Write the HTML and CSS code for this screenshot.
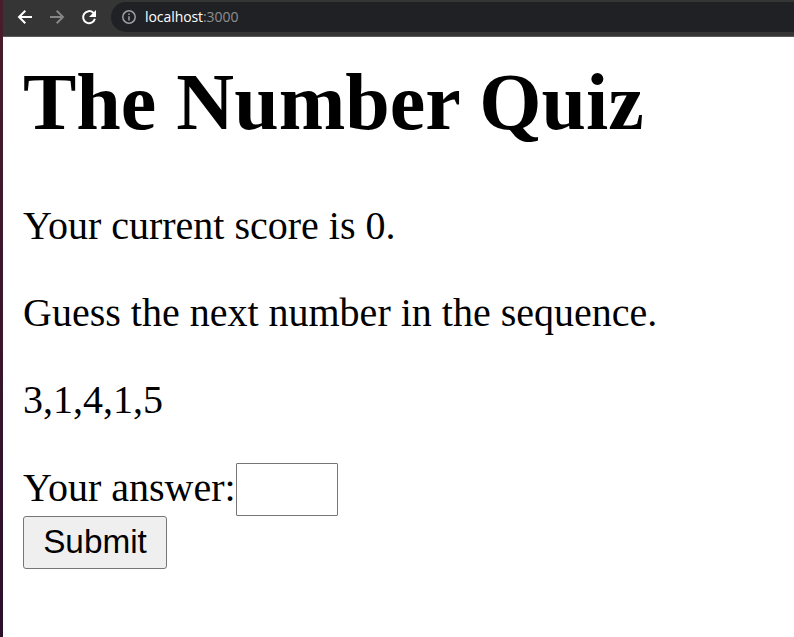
FILE: index.html
```
<!DOCTYPE html>
<html lang="en">
<head>
<meta charset="utf-8">
<title>The Number Quiz</title>
<link rel="stylesheet" href="styles.css">
</head>
<body>
<div class="window">
  <header class="toolbar">
    <svg class="nav" viewBox="0 0 16 16"><path d="M15 8H2.5M8.3 1.7L2 8l6.3 6.3"/></svg>
    <svg class="nav nav-off" viewBox="0 0 16 16"><path d="M1 8h12.5M7.7 1.7L14 8l-6.3 6.3"/></svg>
    <svg class="nav" viewBox="0 0 16 16"><path d="M13.9 9.8A6 6 0 1 1 12.3 3.8L13.5 5"/><path class="solid" d="M15 1v7H8z"/></svg>
    <div class="address">
      <svg class="info" viewBox="0 0 14 14"><circle cx="7" cy="7" r="6.2"/><path d="M7 6.2v4.3M7 3.5v1.5"/></svg>
      <span class="host">localhost<span class="port">:3000</span></span>
    </div>
  </header>
  <main class="page">
    <h1>The Number Quiz</h1>
    <p>Your current score is 0.</p>
    <p>Guess the next number in the sequence.</p>
    <p>3,1,4,1,5</p>
    <form>
      <label class="answer"><span class="caption">Your answer:</span><input type="text"></label>
      <button type="button">Submit</button>
    </form>
  </main>
</div>
</body>
</html>
```
FILE: styles.css
```
body {
  margin: 0;
  background: linear-gradient(#481d2c, #2c102b);
  height: 637px;
  overflow: hidden;
}
.window {
  margin-left: 3px;
  height: 637px;
  background: #fff;
}
.toolbar {
  display: flex;
  align-items: center;
  box-sizing: border-box;
  height: 37px;
  padding: 0 0 2px 14px;
  border-bottom: 1px solid #5b5b5b;
  background: #353535;
}
.nav {
  width: 16px;
  height: 16px;
  margin-right: 16px;
  fill: none;
  stroke: #fff;
  stroke-width: 2;
}
.nav-off { stroke: #868686; }
.nav .solid { fill: #fff; stroke: none; }
.address {
  display: flex;
  align-items: center;
  flex: 1;
  height: 30px;
  margin-left: -2px;
  padding-left: 11px;
  border-radius: 15px 0 0 15px;
  background: #202124;
}
.info {
  width: 14px;
  height: 14px;
  margin-right: 9px;
  fill: none;
  stroke: #9aa0a6;
  stroke-width: 1.5;
}
.host {
  padding-bottom: 2px;
  font: 14px "Open Sans", sans-serif;
  letter-spacing: -0.07px;
  color: #fff;
}
.port { color: #8f8f91; }
.page {
  padding: 22px 20px 0;
  font: 40px/47px "Liberation Serif", serif;
  color: #000;
}
h1 {
  margin: 0 0 57px;
  font-size: 80px;
  line-height: 86px;
}
p { margin: 0 0 40px; }
.answer { display: flex; align-items: center; height: 53px; }
.caption { padding-bottom: 4px; }
input {
  box-sizing: border-box;
  width: 102px;
  height: 53px;
  padding: 2px;
  border: 1px solid #767676;
  border-radius: 1px;
  font: 33px "Liberation Sans", sans-serif;
}
button {
  display: block;
  width: 144px;
  height: 53px;
  padding: 0 0 2px;
  border: 1px solid #767676;
  border-radius: 3px;
  background: #efefef;
  color: #000;
  font: 33.33px "Liberation Sans", sans-serif;
}
```
